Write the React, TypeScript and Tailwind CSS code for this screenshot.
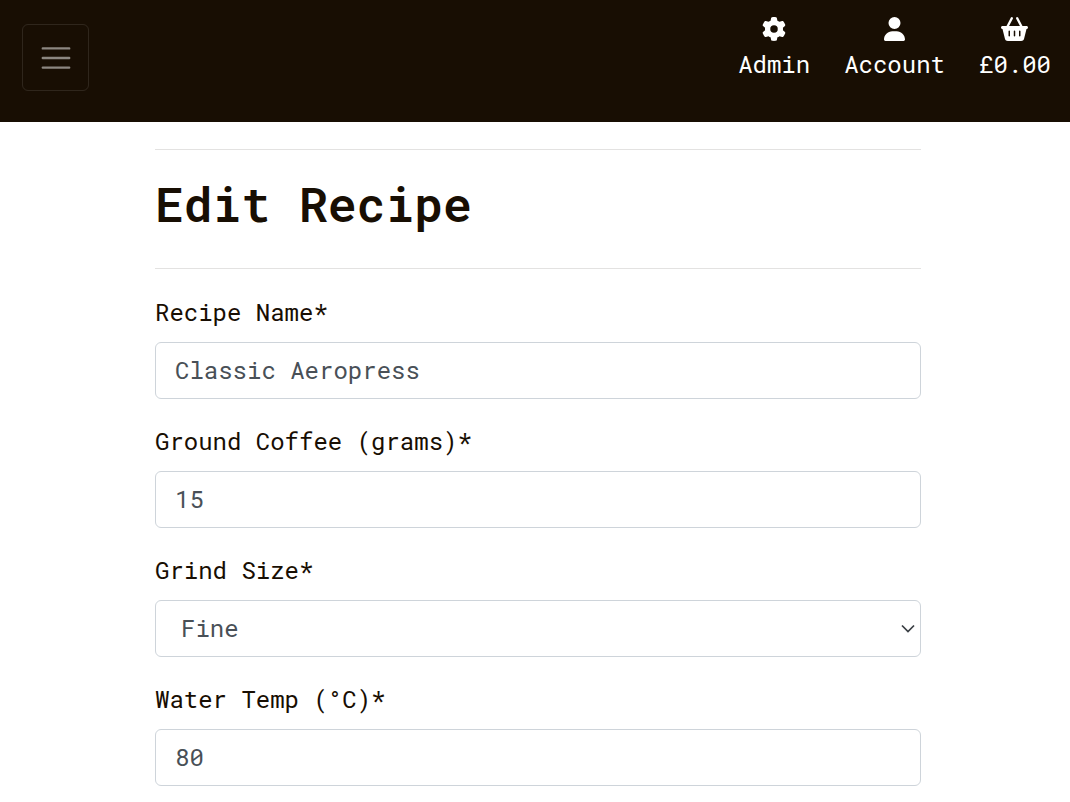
import type { ReactNode } from "react";
import { FaBasketShopping, FaGear, FaUser } from "react-icons/fa6";

const control =
  "block h-[57px] w-full rounded-md border border-[#ced4da] bg-white pb-0.5 text-[#495057] outline-none focus:border-[#86b7fe]";

function NavItem({ icon, text }: { icon: ReactNode; text: string }) {
  return (
    <a href="#" className="flex flex-col items-center text-white">
      {icon}
      <span className="mt-[5px] leading-9">{text}</span>
    </a>
  );
}

function Field({ id, label, children }: { id: string; label: string; children: ReactNode }) {
  return (
    <div className="flex flex-col gap-3">
      <label htmlFor={id} className="leading-9">
        {label}
      </label>
      {children}
    </div>
  );
}

export default function App() {
  return (
    <div className="bg-white font-['Roboto_Mono','Liberation_Mono',monospace] text-2xl text-[#180e03]">
      <header className="flex items-start justify-between bg-[#180e03] pt-[17px] pr-[19px] pb-[27px] pl-[22px]">
        <button
          type="button"
          aria-label="Toggle navigation"
          className="mt-[7px] mb-1 flex size-[67px] items-center justify-center rounded-md border border-white/10"
        >
          <svg className="size-9" viewBox="0 0 30 30" fill="none" stroke="#fff" strokeOpacity="0.5" strokeWidth="2" strokeLinecap="round">
            <path d="M4 7h22M4 15h22M4 23h22" />
          </svg>
        </button>
        <nav className="flex gap-[34px]">
          <NavItem icon={<FaGear className="size-6" />} text="Admin" />
          <NavItem icon={<FaUser className="h-6 w-[21px]" />} text="Account" />
          <NavItem icon={<FaBasketShopping className="h-6 w-[27px]" />} text="£0.00" />
        </nav>
      </header>
      <main className="pt-[27px] pr-[149px] pb-4 pl-[155px]">
        <hr className="border-[#e3e2e1]" />
        <h1 className="mt-[25px] mb-[35px] text-5xl leading-[58px] font-semibold">Edit Recipe</h1>
        <hr className="border-[#e3e2e1]" />
        <form className="mt-[25px] flex flex-col gap-6">
          <Field id="name" label="Recipe Name*">
            <input id="name" type="text" defaultValue="Classic Aeropress" className={`${control} px-[19px]`} />
          </Field>
          <Field id="coffee" label="Ground Coffee (grams)*">
            <input id="coffee" type="text" inputMode="numeric" defaultValue="15" className={`${control} px-[19px]`} />
          </Field>
          <Field id="grind" label="Grind Size*">
            <div className="relative">
              <select id="grind" defaultValue="Fine" className={`${control} appearance-none pr-9 pl-[25px]`}>
                <option>Fine</option>
                <option>Medium</option>
                <option>Coarse</option>
              </select>
              <svg
                className="pointer-events-none absolute top-6 right-1.5 h-2.5 w-3.5"
                viewBox="0 0 14 10"
                fill="none"
                stroke="#3a3f44"
                strokeWidth="1.75"
              >
                <path d="M1 1.5 7 7.5 13 1.5" />
              </svg>
            </div>
          </Field>
          <Field id="temp" label="Water Temp (°C)*">
            <input id="temp" type="text" inputMode="numeric" defaultValue="80" className={`${control} px-[19px]`} />
          </Field>
        </form>
      </main>
    </div>
  );
}
